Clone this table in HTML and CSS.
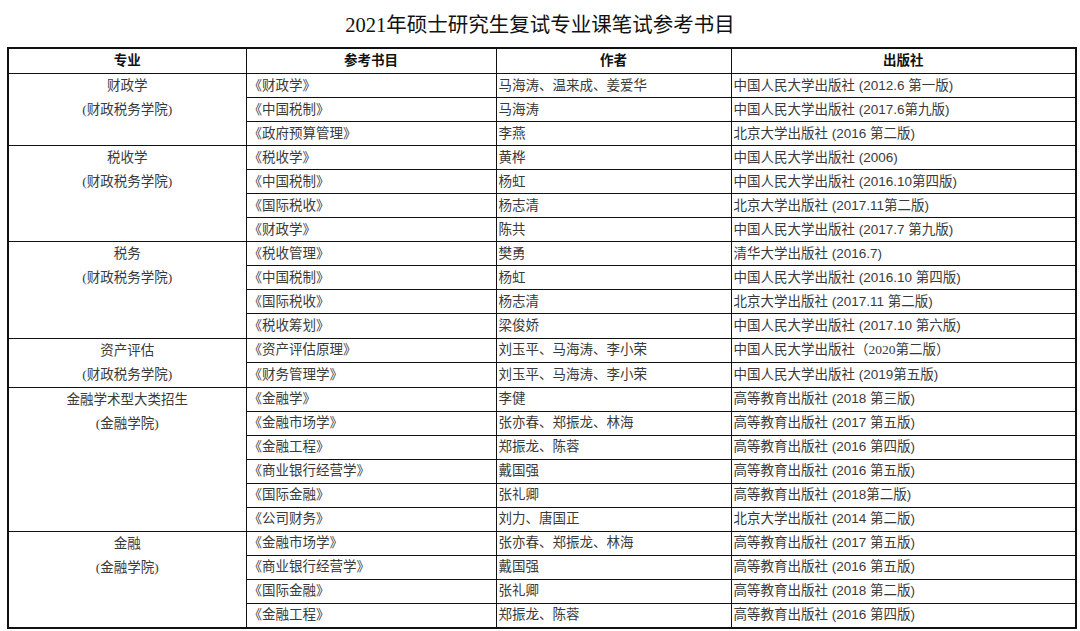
FILE: index.html
```html
<!DOCTYPE html>
<html lang="zh-CN">
<head>
<meta charset="utf-8">
<title>2021年硕士研究生复试专业课笔试参考书目</title>
<link rel="stylesheet" href="styles.css">
</head>
<body>
<h1 class="title">2021年硕士研究生复试专业课笔试参考书目</h1>
<table class="books">
<colgroup>
<col class="c-major"><col class="c-book"><col class="c-author"><col class="c-pub">
</colgroup>
<thead>
<tr><th>专业</th><th>参考书目</th><th>作者</th><th>出版社</th></tr>
</thead>
<tbody>
<tr><td class="major" rowspan="3">财政学<br>(财政税务学院)</td><td>《财政学》</td><td>马海涛、温来成、姜爱华</td><td class="pub">中国人民大学出版社 (2012.6 第一版)</td></tr>
<tr><td>《中国税制》</td><td>马海涛</td><td class="pub">中国人民大学出版社 (2017.6第九版)</td></tr>
<tr><td>《政府预算管理》</td><td>李燕</td><td class="pub">北京大学出版社 (2016 第二版)</td></tr>

<tr><td class="major" rowspan="4">税收学<br>(财政税务学院)</td><td>《税收学》</td><td>黄桦</td><td class="pub">中国人民大学出版社 (2006)</td></tr>
<tr><td>《中国税制》</td><td>杨虹</td><td class="pub">中国人民大学出版社 (2016.10第四版)</td></tr>
<tr><td>《国际税收》</td><td>杨志清</td><td class="pub">北京大学出版社 (2017.11第二版)</td></tr>
<tr><td>《财政学》</td><td>陈共</td><td class="pub">中国人民大学出版社 (2017.7 第九版)</td></tr>

<tr><td class="major" rowspan="4">税务<br>(财政税务学院)</td><td>《税收管理》</td><td>樊勇</td><td class="pub">清华大学出版社 (2016.7)</td></tr>
<tr><td>《中国税制》</td><td>杨虹</td><td class="pub">中国人民大学出版社 (2016.10 第四版)</td></tr>
<tr><td>《国际税收》</td><td>杨志清</td><td class="pub">北京大学出版社 (2017.11 第二版)</td></tr>
<tr><td>《税收筹划》</td><td>梁俊娇</td><td class="pub">中国人民大学出版社 (2017.10 第六版)</td></tr>

<tr><td class="major" rowspan="2">资产评估<br>(财政税务学院)</td><td>《资产评估原理》</td><td>刘玉平、马海涛、李小荣</td><td class="pub">中国人民大学出版社<span class="fw">（2020第二版）</span></td></tr>
<tr><td>《财务管理学》</td><td>刘玉平、马海涛、李小荣</td><td class="pub">中国人民大学出版社 (2019第五版)</td></tr>

<tr><td class="major" rowspan="6">金融学术型大类招生<br>(金融学院)</td><td>《金融学》</td><td>李健</td><td class="pub">高等教育出版社 (2018 第三版)</td></tr>
<tr><td>《金融市场学》</td><td>张亦春、郑振龙、林海</td><td class="pub">高等教育出版社 (2017 第五版)</td></tr>
<tr><td>《金融工程》</td><td>郑振龙、陈蓉</td><td class="pub">高等教育出版社 (2016 第四版)</td></tr>
<tr><td>《商业银行经营学》</td><td>戴国强</td><td class="pub">高等教育出版社 (2016 第五版)</td></tr>
<tr><td>《国际金融》</td><td>张礼卿</td><td class="pub">高等教育出版社 (2018第二版)</td></tr>
<tr><td>《公司财务》</td><td>刘力、唐国正</td><td class="pub">北京大学出版社 (2014 第二版)</td></tr>

<tr><td class="major" rowspan="4">金融<br>(金融学院)</td><td>《金融市场学》</td><td>张亦春、郑振龙、林海</td><td class="pub">高等教育出版社 (2017 第五版)</td></tr>
<tr><td>《商业银行经营学》</td><td>戴国强</td><td class="pub">高等教育出版社 (2016 第五版)</td></tr>
<tr><td>《国际金融》</td><td>张礼卿</td><td class="pub">高等教育出版社 (2018 第二版)</td></tr>
<tr><td>《金融工程》</td><td>郑振龙、陈蓉</td><td class="pub">高等教育出版社 (2016 第四版)</td></tr>
</tbody>
</table>
</body>
</html>
```

FILE: styles.css
```css
html, body {
  margin: 0;
  padding: 0;
  background: #ffffff;
}
body {
  width: 1080px;
  height: 631px;
  overflow: hidden;
  font-family: "Liberation Serif", "Noto Sans CJK SC", serif;
  color: #3a3a3a;
}
.title {
  margin: 0;
  padding-top: 12px;
  height: 35px;
  font-size: 20.5px;
  line-height: 27px;
  font-weight: 400;
  text-align: center;
  color: #111;
  font-family: "Liberation Serif", "Noto Sans CJK SC", serif;
}
.books {
  margin-left: 7px;
  width: 1068px;
  border-collapse: collapse;
  table-layout: fixed;
  border: 2px solid #111;
  font-size: 13.5px;
}
.c-major { width: 238px; }
.c-book { width: 250px; }
.c-author { width: 235px; }
.c-pub { width: 345px; }
.books th,
.books td {
  border: 1px solid #111;
  padding: 0 2px;
  white-space: nowrap;
  overflow: hidden;
}
.books th {
  height: 24px;
  font-family: "Liberation Sans", "Noto Sans CJK SC", sans-serif;
  font-weight: 700;
  font-size: 13.5px;
  color: #111;
  text-align: center;
  vertical-align: middle;
  line-height: 16px;
}
.books td {
  height: 23.05px;
  line-height: 16px;
  text-align: left;
  vertical-align: middle;
}
.books td.major {
  text-align: center;
  vertical-align: top;
  line-height: 24px;
}
.books td.pub {
  font-family: "Liberation Sans", "Noto Sans CJK SC", sans-serif;
}
.fw {
  font-family: "Liberation Serif", "Noto Sans CJK SC", serif;
}
```
